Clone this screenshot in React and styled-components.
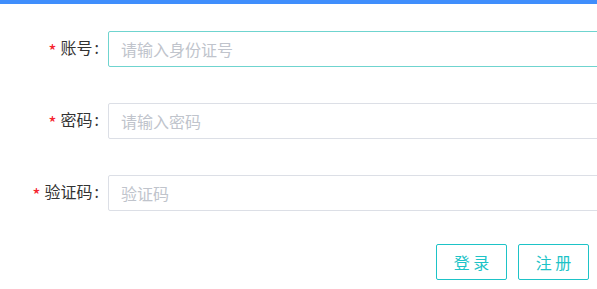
import React from 'react';
import styled, { createGlobalStyle } from 'styled-components';

const GlobalStyle = createGlobalStyle`
  html, body {
    margin: 0;
    padding: 0;
    overflow: hidden;
    background: #fff;
    font-family: "Noto Sans CJK SC", "Microsoft YaHei", sans-serif;
  }
`;

const TopBar = styled.div`
  height: 4px;
  background-color: #3f8efc;
`;

const Form = styled.form`
  width: 720px;
  padding-top: 27px;
  display: flex;
  flex-direction: column;
  gap: 36px;
`;

const Row = styled.div`
  display: flex;
  flex-direction: row;
  align-items: center;
  height: 36px;
`;

const Label = styled.label`
  width: 108px;
  box-sizing: border-box;
  padding-right: 9px;
  text-align: right;
  font-size: 16px;
  color: #333;
  white-space: nowrap;
`;

const Star = styled.span`
  color: #f5222d;
  font-size: 18px;
  margin-right: 4px;
  vertical-align: -0.22em;
`;

const Colon = styled.span`
  margin-left: 2px;
`;

const Input = styled.input`
  flex: 1;
  height: 36px;
  box-sizing: border-box;
  padding: 0 12px;
  border: 1px solid ${(p) => (p.$active ? '#6fd4cf' : '#dcdfe6')};
  border-radius: 2px;
  font-family: inherit;
  font-size: 16px;
  color: #333;
  outline: none;
  &::placeholder {
    color: #c0c4cc;
  }
`;

const Actions = styled.div`
  width: 597px;
  display: flex;
  justify-content: flex-end;
  gap: 11px;
  padding-right: 8px;
  box-sizing: border-box;
  margin-top: -3px;
`;

const Button = styled.button`
  width: 71px;
  height: 36px;
  background: #fff;
  border: 1px solid #1dc3c7;
  border-radius: 2px;
  color: #1dc3c7;
  font-family: inherit;
  font-size: 16px;
  cursor: pointer;
  padding: 0;
`;

const fields = [
  { label: '账号', placeholder: '请输入身份证号', active: true },
  { label: '密码', placeholder: '请输入密码', type: 'password' },
  { label: '验证码', placeholder: '验证码' },
];

const App = () => {
  return (
    <>
      <GlobalStyle />
      <TopBar />
      <Form onSubmit={(e) => e.preventDefault()}>
        {fields.map((f) => (
          <Row key={f.label}>
            <Label>
              <Star>*</Star>
              {f.label}
              <Colon>:</Colon>
            </Label>
            <Input type={f.type || 'text'} placeholder={f.placeholder} $active={f.active} />
          </Row>
        ))}
        <Actions>
          <Button type="submit">登 录</Button>
          <Button type="button">注 册</Button>
        </Actions>
      </Form>
    </>
  );
};

export default App;
